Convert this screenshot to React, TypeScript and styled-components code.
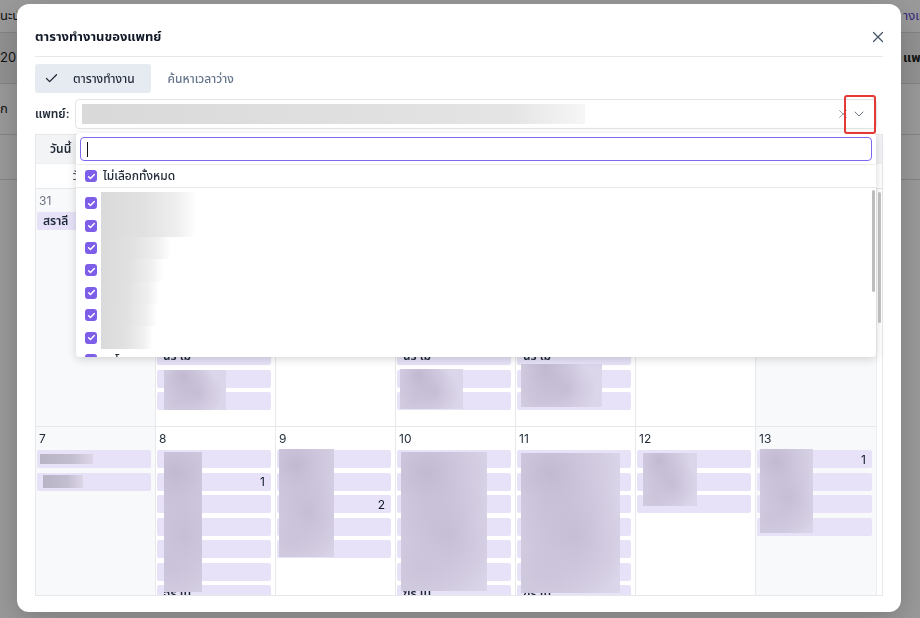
import styled, { createGlobalStyle } from "styled-components";
import { FunctionComponent } from "react";
import { Check, X, ChevronDown } from "lucide-react";

const GlobalStyle = createGlobalStyle`
  html, body {
    margin: 0;
    padding: 0;
    background: #fff;
  }
  body {
    font-family: "Inter", "Noto Sans Thai", "Noto Sans", "Noto Sans CJK SC", sans-serif;
    color: #1f2937;
  }
  * {
    box-sizing: border-box;
  }
`;

/* ---------- page behind the dialog ---------- */

const Page = styled.div`
  width: 920px;
  height: 618px;
  overflow: hidden;
  background: #fff;
`;

const PageRow = styled.div<{ $height: number; $shade?: boolean }>`
  height: ${({ $height }) => $height}px;
  display: flex;
  justify-content: space-between;
  align-items: center;
  border-bottom: 1px solid #dcdcdc;
  background: ${({ $shade }) => ($shade ? "#f2f2f2" : "#fff")};
  font-size: 13px;
`;

const PageCell = styled.span<{ $link?: boolean; $bold?: boolean }>`
  width: 17px;
  overflow: hidden;
  white-space: nowrap;
  color: ${({ $link }) => ($link ? "#5b3fd0" : "#222")};
  font-weight: ${({ $bold }) => ($bold ? 700 : 400)};
`;

/* ---------- dialog ---------- */

const Overlay = styled.div`
  position: fixed;
  inset: 0;
  background: rgba(0, 0, 0, 0.4);
  display: flex;
  align-items: flex-start;
  padding: 4px 0 0 17px;
`;

const Modal = styled.div`
  width: 884px;
  height: 608px;
  background: #fff;
  border-radius: 12px;
  padding: 0 18px 16px;
  display: flex;
  flex-direction: column;
  box-shadow: 0 8px 30px rgba(0, 0, 0, 0.2);
`;

const Header = styled.div`
  height: 53px;
  flex-shrink: 0;
  display: flex;
  align-items: center;
  justify-content: space-between;
  border-bottom: 1px solid #e5e7eb;
  padding-top: 14px;
`;

const Title = styled.h2`
  margin: 0;
  font-size: 13px;
  font-weight: 700;
  color: #111827;
`;

const CloseButton = styled.button`
  border: none;
  background: none;
  padding: 0;
  margin-right: -4px;
  display: flex;
  color: #475569;
  cursor: pointer;
`;

const Tabs = styled.div`
  margin-top: 7px;
  height: 29px;
  flex-shrink: 0;
  display: flex;
`;

const Tab = styled.button<{ $active?: boolean }>`
  border: none;
  border-radius: 3px;
  height: 29px;
  display: flex;
  align-items: center;
  gap: 14px;
  padding: ${({ $active }) => ($active ? "0 16px 0 9px" : "0 17px")};
  background: ${({ $active }) => ($active ? "#e6eaf1" : "transparent")};
  color: ${({ $active }) => ($active ? "#1f2937" : "#64748b")};
  font-family: inherit;
  font-size: 12px;
  font-weight: 500;
`;

const DoctorRow = styled.div`
  margin-top: 6px;
  height: 30px;
  flex-shrink: 0;
  display: flex;
  align-items: center;
  gap: 6px;
  padding-right: 6px;
`;

const Label = styled.span`
  font-size: 12px;
  font-weight: 600;
  color: #1f2937;
  width: 34px;
`;

const SelectBox = styled.div`
  position: relative;
  flex: 1;
  height: 30px;
  border: 1px solid #e3e5e8;
  border-radius: 4px;
  display: flex;
  align-items: center;
  padding: 0 6px;
`;

const SelectedNames = styled.div`
  width: 503px;
  height: 20px;
  background: linear-gradient(90deg, #d9d9d9 0%, #dedede 40%, #e4e4e4 85%, #f6f6f6 100%);
`;

const SelectIcons = styled.div`
  margin-left: auto;
  display: flex;
  align-items: center;
  gap: 1px;
  padding-right: 3px;
`;

const Annotation = styled.div`
  position: absolute;
  right: 0;
  top: -5px;
  width: 32px;
  height: 39px;
  border: 2.5px solid #e53935;
  border-radius: 3px;
  pointer-events: none;
  z-index: 6;
`;

/* ---------- dropdown ---------- */

const Dropdown = styled.div`
  position: absolute;
  top: calc(100% + 5px);
  left: 0;
  right: 0;
  height: 224px;
  background: #fff;
  border-radius: 4px;
  box-shadow: 0 2px 10px rgba(0, 0, 0, 0.16);
  z-index: 5;
  overflow: hidden;
  display: flex;
  flex-direction: column;
`;

const SearchWrap = styled.div`
  padding: 4px 4px 3px;
  border-bottom: 1px solid #eeeeee;
`;

const SearchInput = styled.div`
  height: 24px;
  border: 1.5px solid #8166ef;
  border-radius: 4px;
  display: flex;
  align-items: center;
  padding-left: 6px;
`;

const Caret = styled.span`
  width: 1px;
  height: 15px;
  background: #111;
`;

const OptionRow = styled.div<{ $divider?: boolean }>`
  height: ${({ $divider }) => ($divider ? 23 : 22.4)}px;
  flex-shrink: 0;
  display: flex;
  align-items: center;
  gap: 6px;
  padding-left: 9px;
  font-size: 12px;
  font-weight: 500;
  color: #1f2937;
  border-bottom: ${({ $divider }) => ($divider ? "1px solid #e8e8e8" : "none")};
`;

const Box = styled.span`
  width: 12px;
  height: 12px;
  border-radius: 3px;
  background: #7d5ee9;
  display: inline-flex;
  align-items: center;
  justify-content: center;
  flex-shrink: 0;
`;

const OptionList = styled.div`
  position: relative;
  flex: 1;
  padding-top: 4px;
  overflow: hidden;
`;

const NameBlur = styled.span<{ $width: number }>`
  margin-left: -2px;
  width: ${({ $width }) => $width}px;
  height: 100%;
  background: linear-gradient(90deg, #dadada 0%, #e1e1e1 45%, #efefef 80%, #ffffff 100%);
`;

const ListThumb = styled.div`
  position: absolute;
  right: 1px;
  top: 2px;
  width: 3px;
  height: 102px;
  border-radius: 2px;
  background: #bdbdbd;
`;

/* ---------- calendar ---------- */

const Calendar = styled.div`
  margin-top: 5px;
  flex: 1;
  border: 1px solid #e5e7eb;
  display: flex;
  flex-direction: column;
  overflow: hidden;
`;

const Toolbar = styled.div`
  height: 28px;
  flex-shrink: 0;
  background: #f3f4f6;
  display: flex;
  align-items: center;
  padding-left: 14px;
  font-size: 12px;
  font-weight: 600;
  color: #1f2937;
`;

const DayNames = styled.div`
  height: 26px;
  flex-shrink: 0;
  display: grid;
  grid-template-columns: repeat(7, 1fr) 6px;
  border-top: 1px solid #eceef1;
  border-bottom: 1px solid #e5e7eb;
`;

const DayName = styled.div`
  display: flex;
  align-items: center;
  justify-content: center;
  font-size: 12px;
  color: #4b5563;
`;

const Body = styled.div`
  position: relative;
  flex: 1;
  overflow: hidden;
  display: grid;
  grid-template-columns: 1fr 6px;
`;

const Weeks = styled.div`
  display: flex;
  flex-direction: column;
`;

const Week = styled.div<{ $height: number }>`
  height: ${({ $height }) => $height}px;
  flex-shrink: 0;
  display: grid;
  grid-template-columns: repeat(7, 1fr);
  border-bottom: 1px solid #e5e7eb;
`;

const Cell = styled.div<{ $weekend?: boolean }>`
  position: relative;
  border-right: 1px solid #e8e9ec;
  background: ${({ $weekend }) => ($weekend ? "#f8f9fb" : "#fff")};
  overflow: hidden;
  &:last-child {
    border-right: none;
  }
`;

const DayNumber = styled.div<{ $muted?: boolean }>`
  height: 23px;
  padding: 6px 0 0 3px;
  font-size: 12px;
  line-height: 12px;
  color: ${({ $muted }) => ($muted ? "#6b7280" : "#1f2937")};
`;

const Chip = styled.div`
  height: 18px;
  margin: 0 4px 4.5px 1px;
  padding: 0 6px 0 6px;
  background: #e7e2f8;
  border-radius: 2px;
  display: flex;
  align-items: center;
  justify-content: space-between;
  font-size: 12px;
  font-weight: 600;
  color: #1f2937;
  white-space: nowrap;
`;

const ChipBar = styled.span<{ $width: number; $offset: number; $height: number }>`
  margin-left: ${({ $offset }) => $offset}px;
  width: ${({ $width }) => $width}px;
  height: ${({ $height }) => $height}px;
  background: linear-gradient(90deg, #b9b3c6 0%, #c3bdd0 60%, #dcd6e8 100%);
`;

const Count = styled.span`
  margin-left: auto;
  font-weight: 400;
  color: #111827;
`;

const Redact = styled.div<{ $l: number; $t: number; $w: number; $h: number }>`
  position: absolute;
  left: ${({ $l }) => $l}px;
  top: ${({ $t }) => $t}px;
  width: ${({ $w }) => $w}px;
  height: ${({ $h }) => $h}px;
  background:
    radial-gradient(circle at 30% 15%, rgba(190, 182, 206, 0.9), transparent 55%),
    radial-gradient(circle at 55% 60%, rgba(196, 188, 212, 0.85), transparent 60%),
    radial-gradient(circle at 20% 85%, rgba(200, 193, 215, 0.8), transparent 55%),
    #dcd6ea;
`;

const Gutter = styled.div`
  position: relative;
  background: #fff;
  border-left: 1px solid #eceef1;
`;

const GutterThumb = styled.div`
  position: absolute;
  left: 1px;
  top: 3px;
  width: 3px;
  height: 131px;
  border-radius: 2px;
  background: #c4c4c4;
`;

/* ---------- data ---------- */

type Area = { l: number; t: number; w: number; h: number };
type Day = {
  day: string;
  muted?: boolean;
  weekend?: boolean;
  chips: number;
  names?: Record<number, string>;
  counts?: Record<number, string>;
  bars?: { w: number; o: number; h: number }[];
  redact?: Area;
};

const dayNames = ["วันอาทิตย์", "วันจันทร์", "วันอังคาร", "วันพุธ", "วันพฤหัสบดี", "วันศุกร์", "วันเสาร์"];

const weeks: { height: number; days: Day[] }[] = [
  {
    height: 238,
    days: [
      { day: "31", muted: true, weekend: true, chips: 1, names: { 0: "สราลี" } },
      { day: "1", chips: 9, names: { 6: "ฉร ไม" }, redact: { l: 8, t: 181, w: 62, h: 40 } },
      { day: "2", chips: 0 },
      { day: "3", chips: 9, names: { 6: "ฉร ไม" }, redact: { l: 4, t: 180, w: 63, h: 40 } },
      { day: "4", chips: 9, names: { 6: "ฉร ไม" }, redact: { l: 5, t: 175, w: 81, h: 43 } },
      { day: "5", chips: 0 },
      { day: "6", weekend: true, chips: 0 },
    ],
  },
  {
    height: 240,
    days: [
      { day: "7", weekend: true, chips: 2, bars: [{ w: 53, o: -3, h: 10 }, { w: 40, o: 0, h: 13 }] },
      { day: "8", chips: 8, counts: { 1: "1" }, names: { 6: "ฉร ไม" }, redact: { l: 8, t: 25, w: 38, h: 140 } },
      { day: "9", chips: 5, counts: { 2: "2" }, redact: { l: 3, t: 22, w: 55, h: 108 } },
      { day: "10", chips: 8, names: { 6: "ฆร ไม" }, redact: { l: 5, t: 25, w: 86, h: 139 } },
      { day: "11", chips: 8, names: { 6: "ฆร ไม" }, redact: { l: 5, t: 26, w: 99, h: 140 } },
      { day: "12", chips: 3, redact: { l: 7, t: 26, w: 54, h: 53 } },
      { day: "13", weekend: true, chips: 4, counts: { 0: "1" }, redact: { l: 4, t: 22, w: 53, h: 84 } },
    ],
  },
];

const doctorWidths = [95, 95, 70, 62, 58, 56, 52, 48];

const CheckMark = () => (
  <svg width="9" height="9" viewBox="0 0 12 12" fill="none">
    <path d="M2.2 6.3l2.4 2.4 5.2-5.4" stroke="#fff" strokeWidth="2" strokeLinecap="round" strokeLinejoin="round" />
  </svg>
);

const DayCell: FunctionComponent<{ d: Day }> = ({ d }) => (
  <Cell $weekend={d.weekend}>
    <DayNumber $muted={d.muted}>{d.day}</DayNumber>
    {Array.from({ length: d.chips }).map((_, i) => {
      const bar = d.bars?.[i];
      return (
        <Chip key={i}>
          {bar && <ChipBar $width={bar.w} $offset={bar.o} $height={bar.h} />}
          {d.names?.[i] && <span>{d.names[i]}</span>}
          {d.counts?.[i] && <Count>{d.counts[i]}</Count>}
        </Chip>
      );
    })}
    {d.redact && <Redact $l={d.redact.l} $t={d.redact.t} $w={d.redact.w} $h={d.redact.h} />}
  </Cell>
);

const App: FunctionComponent = () => {
  return (
    <>
      <GlobalStyle />
      <Page>
        <PageRow $height={33}>
          <PageCell>นะนำ</PageCell>
          <PageCell $link>างแพทย์</PageCell>
        </PageRow>
        <PageRow $height={51} $shade>
          <PageCell>20 มี</PageCell>
          <PageCell $bold>แพทย์</PageCell>
        </PageRow>
        <PageRow $height={51}>
          <PageCell>ก</PageCell>
          <PageCell />
        </PageRow>
        <PageRow $height={45}>
          <PageCell />
          <PageCell />
        </PageRow>
      </Page>

      <Overlay>
        <Modal>
          <Header>
            <Title>ตารางทำงานของแพทย์</Title>
            <CloseButton aria-label="close">
              <X size={18} strokeWidth={1.6} />
            </CloseButton>
          </Header>

          <Tabs>
            <Tab $active>
              <Check size={15} strokeWidth={2} />
              ตารางทำงาน
            </Tab>
            <Tab>ค้นหาเวลาว่าง</Tab>
          </Tabs>

          <DoctorRow>
            <Label>แพทย์:</Label>
            <SelectBox>
              <SelectedNames />
              <SelectIcons>
                <X size={14} strokeWidth={1.4} color="#8b8f98" />
                <ChevronDown size={16} strokeWidth={1.5} color="#6b7280" />
              </SelectIcons>
              <Annotation />

              <Dropdown>
                <SearchWrap>
                  <SearchInput>
                    <Caret />
                  </SearchInput>
                </SearchWrap>
                <OptionRow $divider>
                  <Box>
                    <CheckMark />
                  </Box>
                  ไม่เลือกทั้งหมด
                </OptionRow>
                <OptionList>
                  {doctorWidths.map((w, i) => (
                    <OptionRow key={i}>
                      <Box>
                        <CheckMark />
                      </Box>
                      {i < 7 ? <NameBlur $width={w} /> : <span>อาโนย</span>}
                    </OptionRow>
                  ))}
                  <ListThumb />
                </OptionList>
              </Dropdown>
            </SelectBox>
          </DoctorRow>

          <Calendar>
            <Toolbar>วันนี้</Toolbar>
            <DayNames>
              {dayNames.map((n) => (
                <DayName key={n}>{n}</DayName>
              ))}
              <div />
            </DayNames>
            <Body>
              <Weeks>
                {weeks.map((w, wi) => (
                  <Week key={wi} $height={w.height}>
                    {w.days.map((d) => (
                      <DayCell key={d.day} d={d} />
                    ))}
                  </Week>
                ))}
              </Weeks>
              <Gutter>
                <GutterThumb />
              </Gutter>
            </Body>
          </Calendar>
        </Modal>
      </Overlay>
    </>
  );
};

export default App;
